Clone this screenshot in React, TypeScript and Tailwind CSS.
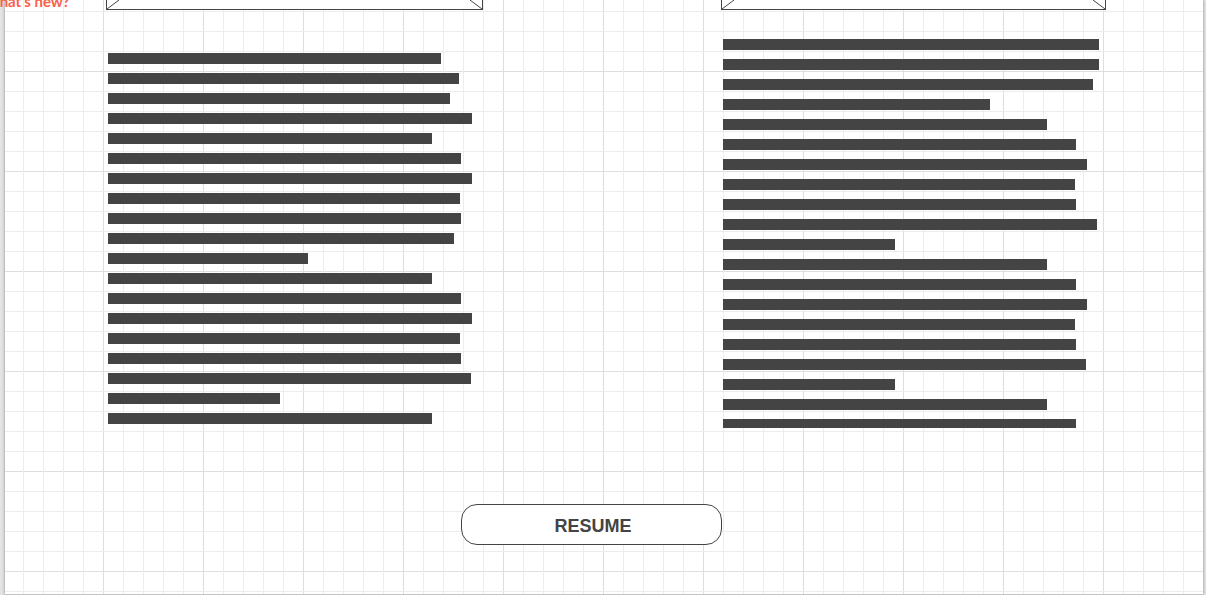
const leftLines = [333, 351, 342, 364, 324, 353, 364, 352, 353, 346, 200, 324, 353, 364, 352, 353, 363, 172, 324];
const rightLines = [376, 376, 370, 267, 324, 353, 364, 352, 353, 374, 172, 324, 353, 364, 352, 353, 363, 172, 324, 353];

function ImagePlaceholder() {
  return (
    <div className="flex h-2.5 justify-between overflow-hidden border-x border-b border-[#444] bg-white">
      <svg width="12" height="9" viewBox="0 0 12 9" className="shrink-0" aria-hidden="true">
        <path d="M0 9L12 0" stroke="#444" strokeWidth="1" />
      </svg>
      <svg width="12" height="9" viewBox="0 0 12 9" className="shrink-0" aria-hidden="true">
        <path d="M12 9L0 0" stroke="#444" strokeWidth="1" />
      </svg>
    </div>
  );
}

function TextLines({ widths }: { widths: number[] }) {
  return (
    <div className="flex flex-col gap-[9px] pl-0.5">
      {widths.map((width, i) => (
        <div key={i} className="h-[11px] max-w-full shrink-0 bg-[#444]" style={{ width }} />
      ))}
    </div>
  );
}

const gridClass =
  "[background-image:repeating-linear-gradient(to_right,transparent_0_20px,#ededed_20px_21px,transparent_21px_40px,#ededed_40px_41px,transparent_41px_60px,#ededed_60px_61px,transparent_61px_80px,#ededed_80px_81px,transparent_81px_100px),repeating-linear-gradient(to_bottom,transparent_0_20px,#ededed_20px_21px,transparent_21px_40px,#ededed_40px_41px,transparent_41px_60px,#ededed_60px_61px,transparent_61px_80px,#ededed_80px_81px,transparent_81px_100px),linear-gradient(to_right,#dedede_1px,transparent_1px),linear-gradient(to_bottom,#dedede_1px,transparent_1px)] [background-size:100px_100px] [background-position:-2px_-29px]";

export default function App() {
  return (
    <div className="min-h-screen overflow-hidden bg-[#e4e4e4] pl-[5px] pr-[3px] font-['Liberation_Sans',sans-serif] text-[#444]">
      <main
        className={`flex min-h-screen flex-col items-stretch border-b border-[#c4c4c4] bg-white pr-[97px] pl-[101px] shadow-[0_0_3px_rgba(0,0,0,0.4)] ${gridClass}`}
      >
        <div className="flex gap-[238px]">
          <section className="min-w-0 flex-[377]">
            <ImagePlaceholder />
            <div className="pt-[43px]">
              <TextLines widths={leftLines} />
            </div>
          </section>
          <section className="min-w-0 flex-[385]">
            <ImagePlaceholder />
            <div className="h-[418px] overflow-hidden pt-[29px]">
              <TextLines widths={rightLines} />
            </div>
          </section>
        </div>
        <div className="flex justify-center pt-[76px] pr-[30px]">
          <button
            type="button"
            className="h-[41px] w-[261px] rounded-2xl border border-[#444] bg-white pt-0.5 pl-1 text-lg font-bold"
          >
            RESUME
          </button>
        </div>
      </main>
      <a
        href="#whats-new"
        className="absolute -top-[9px] -left-4 font-['Lato',sans-serif] text-[15px] leading-5 font-bold whitespace-nowrap text-[#fb6248]"
      >
        What's new?
      </a>
    </div>
  );
}
